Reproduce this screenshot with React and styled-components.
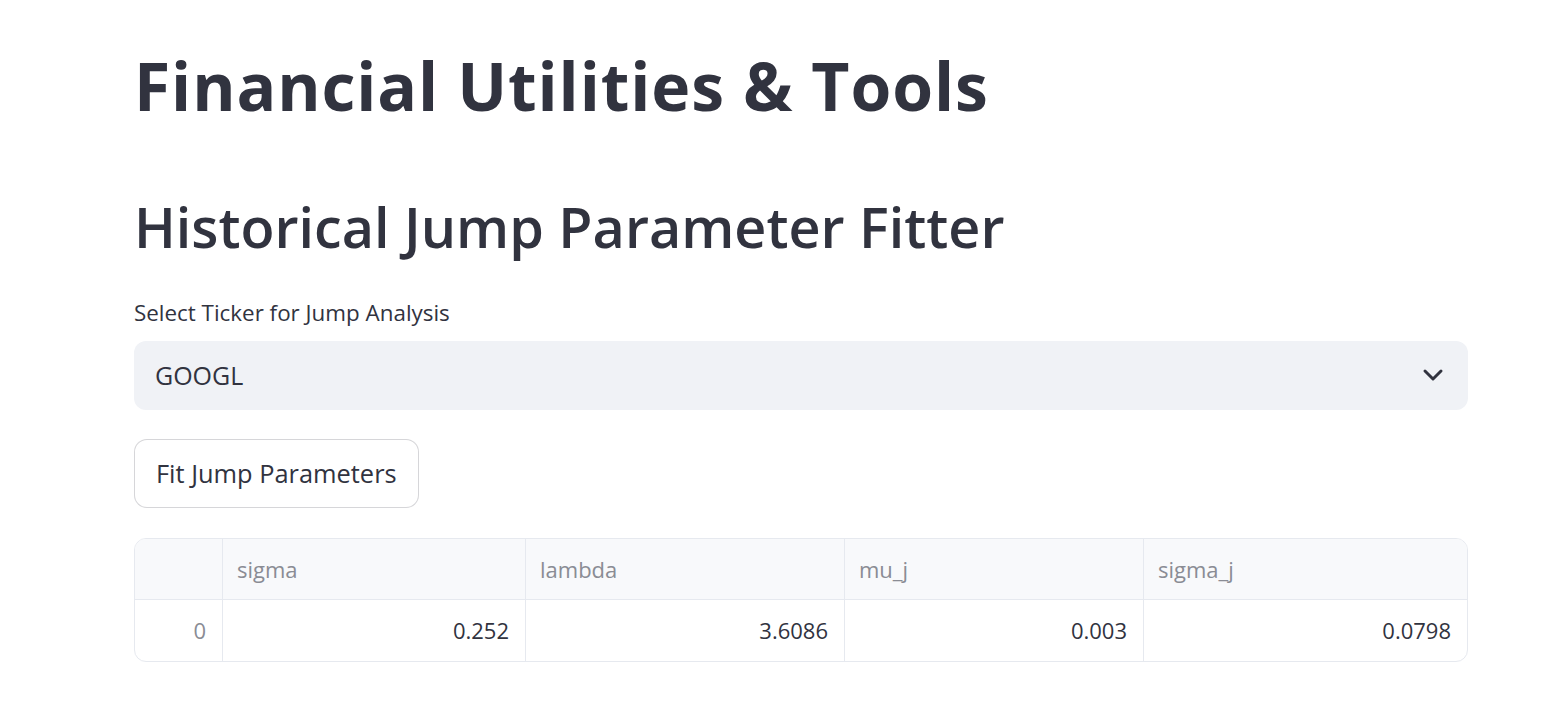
import React from "react";
import styled, { createGlobalStyle } from "styled-components";

const GlobalStyle = createGlobalStyle`
  body {
    margin: 0;
    background: #ffffff;
    color: #31333f;
    font-family: "Open Sans", "Lato", sans-serif;
  }
`;

const columns = ["sigma", "lambda", "mu_j", "sigma_j"];
const rows = [{ index: 0, values: ["0.252", "3.6086", "0.003", "0.0798"] }];

const App = () => {
  return (
    <>
      <GlobalStyle />
      <Page>
        <Title>Financial Utilities &amp; Tools</Title>
        <SubTitle>Historical Jump Parameter Fitter</SubTitle>
        <Label>Select Ticker for Jump Analysis</Label>
        <SelectBox>
          <SelectValue>GOOGL</SelectValue>
          <Chevron width="22" height="14" viewBox="0 0 22 14">
            <polyline
              points="3,3 11,11 19,3"
              fill="none"
              stroke="#31333f"
              strokeWidth="3"
              strokeLinecap="round"
              strokeLinejoin="round"
            />
          </Chevron>
        </SelectBox>
        <FitButton>Fit Jump Parameters</FitButton>
        <Table>
          <HeadCell $index />
          {columns.map((col) => (
            <HeadCell key={col}>{col}</HeadCell>
          ))}
          {rows.map((row) => (
            <React.Fragment key={row.index}>
              <IndexCell>{row.index}</IndexCell>
              {row.values.map((v, i) => (
                <DataCell key={i}>{v}</DataCell>
              ))}
            </React.Fragment>
          ))}
        </Table>
      </Page>
    </>
  );
};

const Page = styled.main`
  display: flex;
  flex-direction: column;
  align-items: stretch;
  width: 1334px;
  padding: 46px 0 40px 134px;
`;

const Title = styled.h1`
  margin: 0;
  font-size: 66px;
  font-weight: 700;
  line-height: 1.2;
  letter-spacing: 0.9px;
`;

const SubTitle = styled.h2`
  margin: 68px 0 0;
  font-size: 55.7px;
  font-weight: 600;
  line-height: 1.2;
`;

const Label = styled.label`
  margin-top: 40px;
  font-size: 22.4px;
  line-height: 1.2;
`;

const SelectBox = styled.div`
  margin-top: 14px;
  height: 69px;
  display: flex;
  align-items: center;
  justify-content: space-between;
  padding: 0 24px 0 21px;
  background: #f0f2f6;
  border-radius: 12px;
  box-sizing: border-box;
`;

const SelectValue = styled.span`
  font-size: 25px;
`;

const Chevron = styled.svg`
  display: block;
`;

const FitButton = styled.button`
  align-self: flex-start;
  margin-top: 29px;
  height: 69px;
  padding: 0 21px;
  background: #ffffff;
  border: 1px solid rgba(49, 51, 63, 0.2);
  border-radius: 13px;
  color: #31333f;
  font-family: inherit;
  font-size: 25.4px;
`;

const Table = styled.div`
  margin-top: 30px;
  display: grid;
  grid-template-columns: 88px 303px 319px 299px 1fr;
  grid-auto-rows: 61px;
  border: 1px solid #e6e9ef;
  border-radius: 12px;
  overflow: hidden;
`;

const Cell = styled.div`
  display: flex;
  align-items: center;
  font-size: 22px;
  border-right: 1px solid #e6e9ef;
  &:nth-child(5n) {
    border-right: none;
  }
`;

const HeadCell = styled(Cell)`
  background: #f8f9fb;
  color: #8a8c94;
  padding: 0 14px;
  border-bottom: 1px solid #e6e9ef;
`;

const IndexCell = styled(Cell)`
  justify-content: flex-end;
  padding: 0 16px;
  color: #8a8c94;
`;

const DataCell = styled(Cell)`
  justify-content: flex-end;
  padding: 0 16px;
  color: #31333f;
`;

export default App;
